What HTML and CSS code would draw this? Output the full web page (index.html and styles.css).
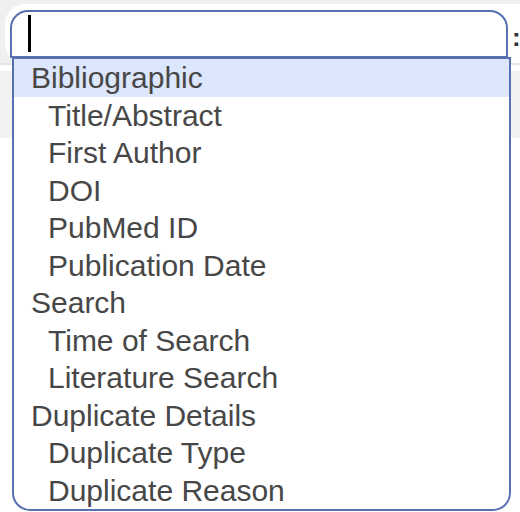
FILE: index.html
```html
<!DOCTYPE html>
<html>
<head>
<meta charset="utf-8">
<link rel="stylesheet" href="styles.css">
</head>
<body>
<div class="strip"></div>
<div class="header">
  <div class="header-inner">
    <div class="input"><span class="caret"></span></div>
    <span class="colon">:</span>
  </div>
</div>
<div class="rule"></div>
<div class="gap"></div>
<div class="band"></div>

<div class="dropdown">
  <div class="opt group active">Bibliographic</div>
  <div class="opt">Title/Abstract</div>
  <div class="opt">First Author</div>
  <div class="opt">DOI</div>
  <div class="opt">PubMed ID</div>
  <div class="opt">Publication Date</div>
  <div class="opt group">Search</div>
  <div class="opt">Time of Search</div>
  <div class="opt">Literature Search</div>
  <div class="opt group">Duplicate Details</div>
  <div class="opt">Duplicate Type</div>
  <div class="opt">Duplicate Reason</div>
</div>
</body>
</html>
```
FILE: styles.css
```css
html, body {
  margin: 0;
  padding: 0;
  background: #ffffff;
  font-family: "Liberation Sans", Arial, sans-serif;
  width: 520px;
  height: 512px;
  overflow: hidden;
  position: relative;
}
.strip {
  height: 4px;
  background: #f0f0f0;
}
.header {
  height: 59px;
  background: #f0f0f0;
  padding-left: 5px;
  display: flex;
}
.header-inner {
  flex: 1;
  background: #ffffff;
  border-radius: 20px 0 0 20px;
  display: flex;
  align-items: flex-start;
  padding: 6px 0 0 5px;
}
.input {
  box-sizing: border-box;
  width: 498px;
  height: 48px;
  border: 2px solid #5670b1;
  border-radius: 18px 18px 0 0;
  display: flex;
  align-items: flex-start;
}
.caret {
  display: block;
  width: 3px;
  height: 37px;
  margin: 3px 0 0 16px;
  background: #000;
}
.colon {
  margin-left: 4px;
  font-size: 26px;
  line-height: 26px;
  margin-top: 14px;
  font-weight: bold;
  color: #333;
}
.rule {
  height: 2px;
  background: #e6e6e6;
}
.gap {
  height: 6px;
}
.band {
  height: 67px;
  background: #f2f2f2;
}
.dropdown {
  position: absolute;
  left: 12px;
  top: 57px;
  width: 499px;
  box-sizing: border-box;
  border: 2px solid #5670b1;
  border-radius: 0 0 18px 18px;
  background: #ffffff;
  overflow: hidden;
}
.opt {
  height: 37.5px;
  line-height: 37.5px;
  font-size: 30px;
  color: #474747;
  padding-left: 34px;
  white-space: nowrap;
}
.opt.group {
  padding-left: 17px;
}
.opt.active {
  background: #dce6fc;
}
```
